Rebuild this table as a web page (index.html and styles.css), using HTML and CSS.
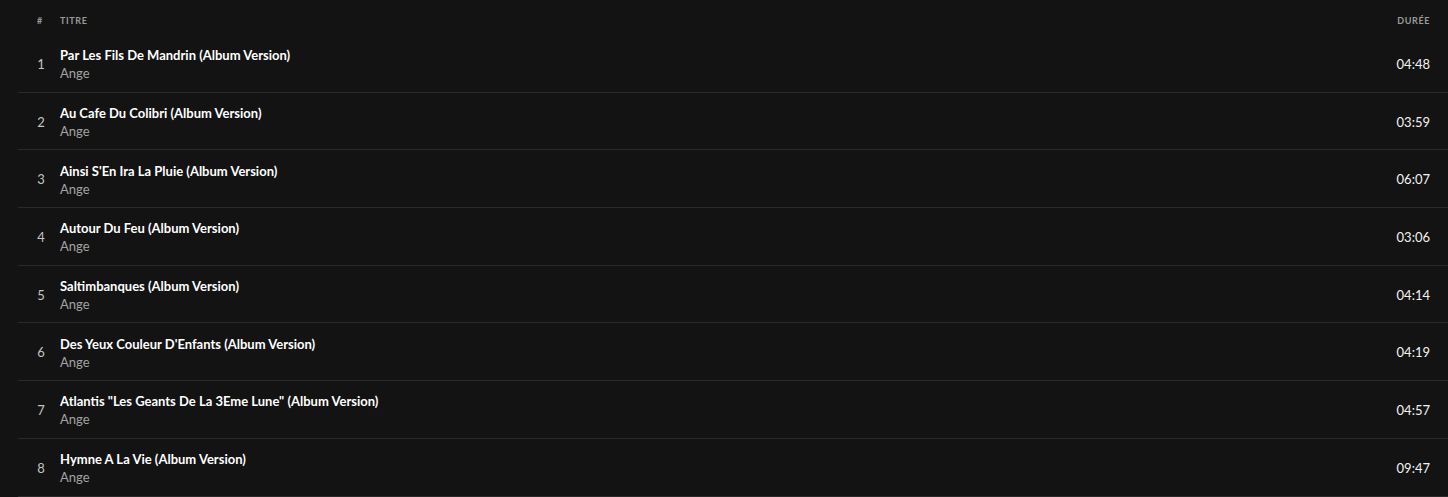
FILE: index.html
```html
<!DOCTYPE html>
<html lang="fr">
<head>
<meta charset="utf-8">
<link rel="stylesheet" href="styles.css">
</head>
<body>
<div class="tracklist">
  <div class="head">
    <div class="c-num">#</div>
    <div class="c-title">Titre</div>
    <div class="c-dur">Durée</div>
  </div>
  <div class="row">
    <div class="c-num">1</div>
    <div class="c-title"><div class="t">Par Les Fils De Mandrin (Album Version)</div><div class="a">Ange</div></div>
    <div class="c-dur">04:48</div>
  </div>
  <div class="row">
    <div class="c-num">2</div>
    <div class="c-title"><div class="t">Au Cafe Du Colibri (Album Version)</div><div class="a">Ange</div></div>
    <div class="c-dur">03:59</div>
  </div>
  <div class="row">
    <div class="c-num">3</div>
    <div class="c-title"><div class="t">Ainsi S'En Ira La Pluie (Album Version)</div><div class="a">Ange</div></div>
    <div class="c-dur">06:07</div>
  </div>
  <div class="row">
    <div class="c-num">4</div>
    <div class="c-title"><div class="t">Autour Du Feu (Album Version)</div><div class="a">Ange</div></div>
    <div class="c-dur">03:06</div>
  </div>
  <div class="row">
    <div class="c-num">5</div>
    <div class="c-title"><div class="t">Saltimbanques (Album Version)</div><div class="a">Ange</div></div>
    <div class="c-dur">04:14</div>
  </div>
  <div class="row">
    <div class="c-num">6</div>
    <div class="c-title"><div class="t">Des Yeux Couleur D'Enfants (Album Version)</div><div class="a">Ange</div></div>
    <div class="c-dur">04:19</div>
  </div>
  <div class="row">
    <div class="c-num">7</div>
    <div class="c-title"><div class="t">Atlantis "Les Geants De La 3Eme Lune" (Album Version)</div><div class="a">Ange</div></div>
    <div class="c-dur">04:57</div>
  </div>
  <div class="row">
    <div class="c-num">8</div>
    <div class="c-title"><div class="t">Hymne A La Vie (Album Version)</div><div class="a">Ange</div></div>
    <div class="c-dur">09:47</div>
  </div>
</div>
</body>
</html>
```
FILE: styles.css
```css
html, body {
  margin: 0;
  padding: 0;
  background: #131313;
}
body {
  font-family: Lato, "Noto Sans", sans-serif;
  color: #fff;
  width: 1448px;
  height: 497px;
  overflow: hidden;
}
.tracklist {
  padding-left: 18px;
}
.head, .row {
  display: grid;
  grid-template-columns: 42px 1fr 120px;
  align-items: center;
}
.head {
  height: 35px;
  box-sizing: border-box;
  padding-top: 6px;
  font-size: 9px;
  font-weight: 700;
  letter-spacing: 0.6px;
  text-transform: uppercase;
  color: #9a9a9a;
}
.row {
  height: 56.7px;
  border-bottom: 1px solid #2a2a2a;
}
.c-num {
  text-align: center;
  padding-left: 2px;
}
.row .c-num {
  font-size: 13px;
  color: #c4c4c4;
  padding-left: 4px;
  padding-top: 1px;
}
.row .c-title {
  padding-top: 2px;
}
.c-dur {
  text-align: right;
  padding-right: 18px;
}
.row .c-dur {
  font-size: 13px;
  color: #f2f2f2;
  padding-top: 1px;
}
.t {
  font-size: 13px;
  font-weight: 700;
  line-height: 18px;
  color: #fff;
}
.a {
  font-size: 13px;
  line-height: 18px;
  color: #a3a3a3;
}
```
